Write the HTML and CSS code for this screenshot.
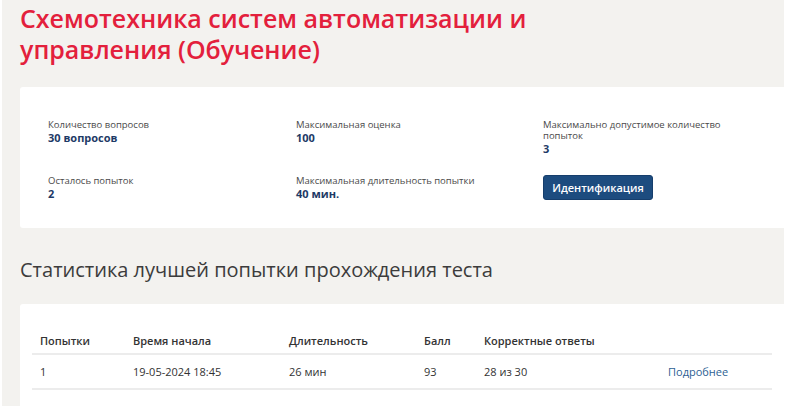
FILE: index.html
```html
<!DOCTYPE html>
<html>
<head>
  <title>Схемотехника систем автоматизации и управления</title>
  <link rel="stylesheet" href="styles.css">
</head>
<body>
  <div class="page">
    <h1 class="courseTitle">Схемотехника систем автоматизации и управления (Обучение)</h1>

    <div class="card infoCard">
      <div class="infoItem">
        <div class="infoLabel">Количество вопросов</div>
        <div class="infoValue">30 вопросов</div>
      </div>
      <div class="infoItem">
        <div class="infoLabel">Максимальная оценка</div>
        <div class="infoValue">100</div>
      </div>
      <div class="infoItem">
        <div class="infoLabel">Максимально допустимое количество попыток</div>
        <div class="infoValue">3</div>
      </div>
      <div class="infoItem">
        <div class="infoLabel">Осталось попыток</div>
        <div class="infoValue">2</div>
      </div>
      <div class="infoItem">
        <div class="infoLabel">Максимальная длительность попытки</div>
        <div class="infoValue">40 мин.</div>
      </div>
      <div class="infoItem">
        <button class="primaryBtn">Идентификация</button>
      </div>
    </div>

    <h2 class="sectionTitle">Статистика лучшей попытки прохождения теста</h2>

    <div class="card tableCard">
      <table class="attempts">
        <tr>
          <th class="colNum">Попытки</th>
          <th class="colStart">Время начала</th>
          <th class="colDur">Длительность</th>
          <th class="colScore">Балл</th>
          <th class="colCorrect">Корректные ответы</th>
          <th class="colMore"></th>
        </tr>
        <tr>
          <td>1</td>
          <td>19-05-2024 18:45</td>
          <td>26 мин</td>
          <td>93</td>
          <td>28 из 30</td>
          <td><a href="#" class="moreLink">Подробнее</a></td>
        </tr>
      </table>
    </div>
  </div>
</body>
</html>
```

FILE: styles.css
```css
body { margin: 0; background: #fff; font-family: "Open Sans", Arial, sans-serif; }
.page {
  margin-left: 2px;
  width: 764px;
  height: 406px;
  padding-left: 18px;
  background: #f3f2ef;
  overflow: hidden;
}
.courseTitle {
  margin: 0;
  max-width: 530px;
  padding-top: 3px;
  font-size: 25px;
  line-height: 31px;
  font-weight: 600;
  color: #e3203c;
}
.card {
  background: #fff;
  border-radius: 3px 0 0 3px;
}
.infoCard {
  margin-top: 22px;
  height: 141px;
  box-sizing: border-box;
  padding: 32px 0 0 28px;
  display: grid;
  grid-template-columns: 248px 247px 190px;
  grid-template-rows: 56px auto;
}
.infoLabel { font-size: 9.5px; line-height: 11px; color: #4a4a4a; }
.infoValue { margin-top: 1px; font-size: 11px; line-height: 13px; font-weight: 700; color: #1e3a66; }
.primaryBtn {
  margin-top: -4px;
  width: 110px;
  height: 25px;
  border: 1px solid #163e6c;
  border-radius: 3px;
  background: #1d4c7f;
  color: #fff;
  font-family: "Open Sans", Arial, sans-serif;
  font-size: 11px;
  font-weight: 600;
  padding: 0;
}
.sectionTitle {
  margin: 0;
  height: 76px;
  line-height: 84px;
  font-size: 20px;
  font-weight: 400;
  color: #3c3c3c;
}
.tableCard {
  padding: 23px 12px 0 12px;
  height: 120px;
}
.attempts {
  width: 740px;
  table-layout: fixed;
  border-collapse: collapse;
  font-size: 11px;
  color: #333;
}
.attempts th {
  text-align: left;
  font-weight: 600;
  height: 26px;
  padding: 0 0 0 8px;
  border-bottom: 2px solid #ececec;
}
.attempts td {
  padding: 0 0 0 8px;
  height: 33px;
  border-bottom: 2px solid #ececec;
}
.colNum { width: 85px; }
.colStart { width: 148px; }
.colDur { width: 127px; }
.colScore { width: 52px; }
.colCorrect { width: 176px; }
.colMore { width: 104px; }
.moreLink { color: #2e5f94; text-decoration: none; }
```
